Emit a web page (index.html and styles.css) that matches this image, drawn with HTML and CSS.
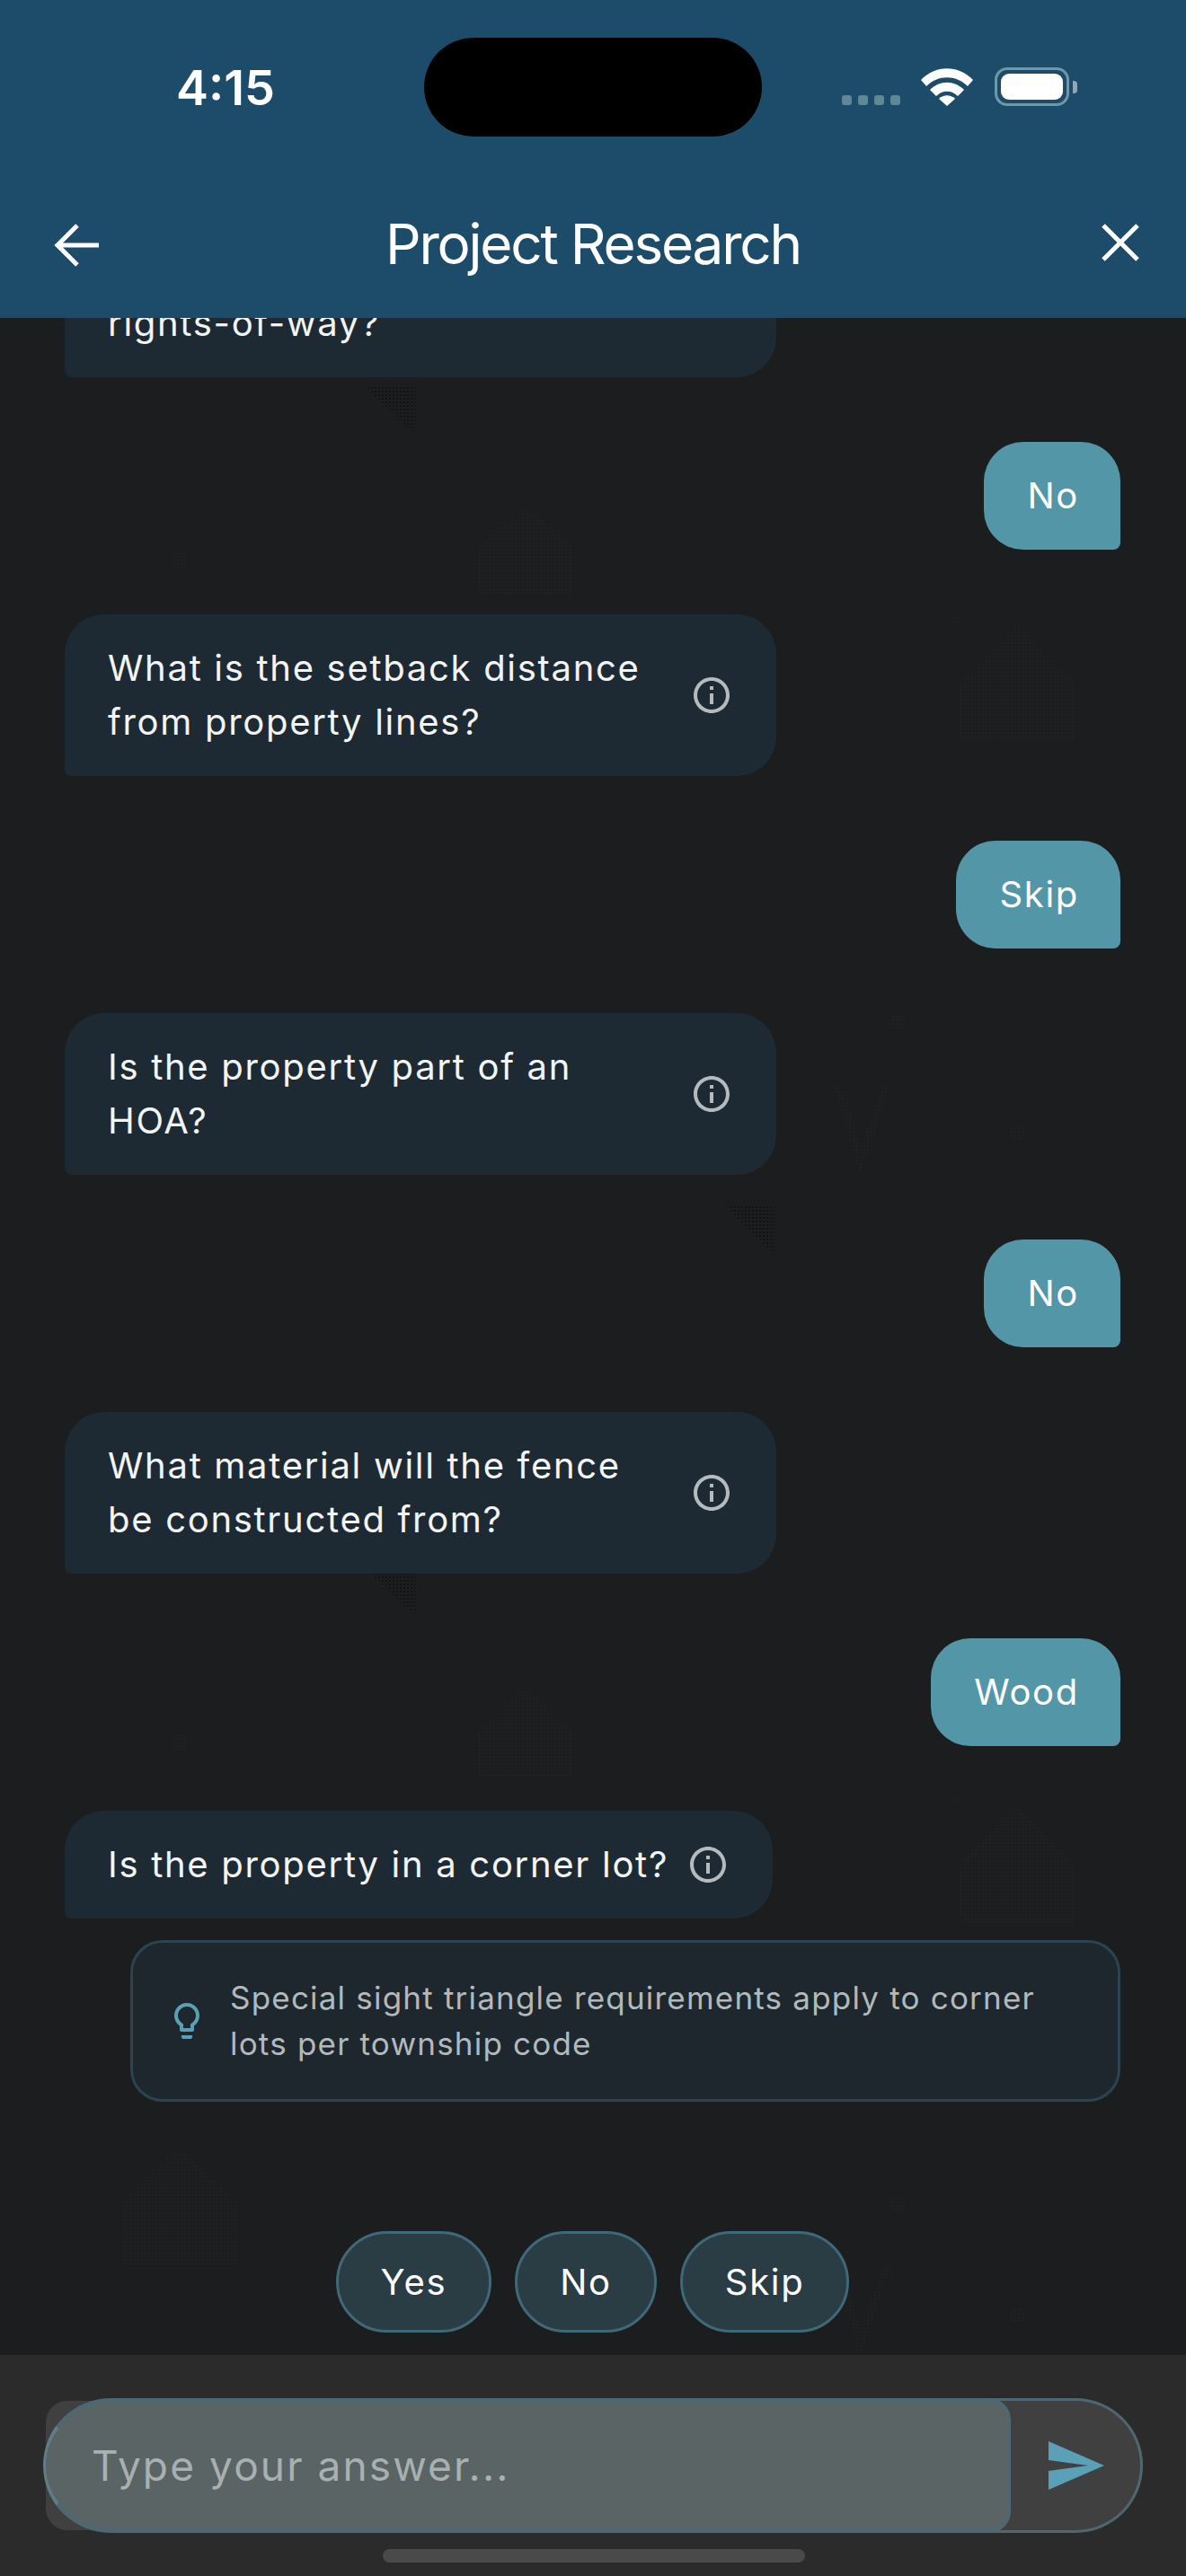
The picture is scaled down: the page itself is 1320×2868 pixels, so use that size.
FILE: index.html
```html
<!DOCTYPE html>
<html lang="en">
<head>
    <meta charset="UTF-8">
    <meta name="viewport" content="width=device-width, initial-scale=1.0">
    <title>Project Research</title>

<link rel="stylesheet" href="styles.css">
</head>
<body>
<div id="tela">

    <div id="topo">
        <div id="status">
            <span id="hora">4:15</span>
            <div id="ilha"></div>
            <div id="status-icones">
                <div id="sinal"><i></i><i></i><i></i><i></i></div>
                <svg width="58" height="42" viewBox="0 0 58 42">
                    <path fill="#fff" d="M0 13 C16 -4 42 -4 58 13 L52 20 C39 7 19 7 6 20Z"/>
                    <path fill="#fff" d="M10 24 C21 13 37 13 48 24 L41 31 C34 24 24 24 17 31Z"/>
                    <path fill="#fff" d="M20 34 C25 29 33 29 38 34 L29 42Z"/>
                </svg>
                <div id="bateria"><div id="bateria-carga"></div></div>
                <div id="bateria-ponta"></div>
            </div>
        </div>
        <div id="barra">
            <svg width="50" height="48" viewBox="0 0 50 48"><path fill="none" stroke="#fff" stroke-width="5" d="M26 2 L4 24 L26 46 M4 24 H50"/></svg>
            <h1 id="titulo">Project Research</h1>
            <svg width="42" height="42" viewBox="0 0 42 42"><path fill="none" stroke="#fff" stroke-width="5" d="M2 2 L40 40 M40 2 L2 40"/></svg>
        </div>
    </div>

    <div id="conversa">
        <!-- desenho de fundo pontilhado, quase invisivel -->
        <svg id="fundo" width="1320" height="2268" viewBox="0 0 1320 2268">
            <defs>
                <pattern id="pontos-escuros" width="4" height="4" patternUnits="userSpaceOnUse">
                    <circle cx="2" cy="2" r="0.7" fill="#000"/>
                </pattern>
                <pattern id="pontos-claros" width="4" height="4" patternUnits="userSpaceOnUse">
                    <circle cx="2" cy="2" r="0.8" fill="#26292b"/>
                </pattern>
                <g id="desenho">
                    <path fill="url(#pontos-escuros)" d="M407 76 L462 76 L462 129Z"/>
                    <path fill="url(#pontos-claros)" d="M585 209 L637 256 L637 308 L533 308 L533 256Z"/>
                    <path fill="url(#pontos-claros)" d="M1131 341 L1195 406 L1195 470 L1067 470 L1067 406Z"/>
                    <circle cx="200" cy="270" r="9" fill="url(#pontos-claros)"/>
                    <circle cx="1064" cy="337" r="5" fill="url(#pontos-claros)"/>
                    <path fill="url(#pontos-escuros)" d="M808 989 L862 989 L862 1043Z"/>
                    <path fill="none" stroke="url(#pontos-claros)" stroke-width="8" d="M932 853 L958 938 L987 853"/>
                    <circle cx="998" cy="784" r="9" fill="url(#pontos-claros)"/>
                    <circle cx="1132" cy="908" r="9" fill="url(#pontos-claros)"/>
                </g>
            </defs>
            <use href="#desenho"/>
            <use href="#desenho" y="1316"/>
            <path fill="url(#pontos-claros)" d="M198 2038 L265 2100 L265 2169 L135 2169 L135 2100Z"/>
        </svg>

        <div class="pergunta cortada">
            <span class="pergunta-texto">rights-of-way?</span>
        </div>
        <div class="resposta">No</div>

        <div class="pergunta">
            <span class="pergunta-texto">What is the setback distance from property lines?</span>
            <svg class="info" width="48" height="48" viewBox="0 0 24 24"><path d="M11 7h2v2h-2zm0 4h2v6h-2zm1-9C6.48 2 2 6.48 2 12s4.48 10 10 10 10-4.48 10-10S17.52 2 12 2zm0 18c-4.41 0-8-3.59-8-8s3.59-8 8-8 8 3.59 8 8-3.59 8-8 8z"/></svg>
        </div>
        <div class="resposta">Skip</div>

        <div class="pergunta">
            <span class="pergunta-texto">Is the property part of an HOA?</span>
            <svg class="info" width="48" height="48" viewBox="0 0 24 24"><path d="M11 7h2v2h-2zm0 4h2v6h-2zm1-9C6.48 2 2 6.48 2 12s4.48 10 10 10 10-4.48 10-10S17.52 2 12 2zm0 18c-4.41 0-8-3.59-8-8s3.59-8 8-8 8 3.59 8 8-3.59 8-8 8z"/></svg>
        </div>
        <div class="resposta">No</div>

        <div class="pergunta">
            <span class="pergunta-texto">What material will the fence be constructed from?</span>
            <svg class="info" width="48" height="48" viewBox="0 0 24 24"><path d="M11 7h2v2h-2zm0 4h2v6h-2zm1-9C6.48 2 2 6.48 2 12s4.48 10 10 10 10-4.48 10-10S17.52 2 12 2zm0 18c-4.41 0-8-3.59-8-8s3.59-8 8-8 8 3.59 8 8-3.59 8-8 8z"/></svg>
        </div>
        <div class="resposta">Wood</div>

        <div class="pergunta">
            <span class="pergunta-texto">Is the property in a corner lot?</span>
            <svg class="info" width="48" height="48" viewBox="0 0 24 24"><path d="M11 7h2v2h-2zm0 4h2v6h-2zm1-9C6.48 2 2 6.48 2 12s4.48 10 10 10 10-4.48 10-10S17.52 2 12 2zm0 18c-4.41 0-8-3.59-8-8s3.59-8 8-8 8 3.59 8 8-3.59 8-8 8z"/></svg>
        </div>

        <div id="dica">
            <svg width="48" height="48" viewBox="0 0 24 24"><path d="M9 21c0 .55.45 1 1 1h4c.55 0 1-.45 1-1v-1H9v1zm3-19C8.14 2 5 5.14 5 9c0 2.38 1.19 4.47 3 5.74V17c0 .55.45 1 1 1h6c.55 0 1-.45 1-1v-2.26c1.81-1.27 3-3.36 3-5.74 0-3.86-3.14-7-7-7zm2.85 11.1l-.85.6V16h-4v-2.3l-.85-.6C7.8 12.16 7 10.63 7 9c0-2.76 2.24-5 5-5s5 2.24 5 5c0 1.63-.8 3.16-2.15 4.1z"/></svg>
            <span id="dica-texto">Special sight triangle requirements apply to corner lots per township code</span>
        </div>

        <div id="opcoes">
            <a class="opcao">Yes</a>
            <a class="opcao">No</a>
            <a class="opcao">Skip</a>
        </div>
    </div>

    <div id="rodape">
        <div id="entrada">
            <div id="campo">Type your answer...</div>
            <a id="enviar">
                <svg width="62" height="54" viewBox="0 0 62 54"><path d="M0 0 L62 27 L0 54 L0 33 L44 27 L0 21Z"/></svg>
            </a>
        </div>
        <div id="indicador"></div>
    </div>

</div>
</body>
</html>
```

FILE: styles.css
```css
* {
    box-sizing: border-box;
}

html, body {
    margin: 0;
    padding: 0;
    background-color: #1c1d1f;
}

#tela {
    width: 1320px;
    height: 2868px;
    display: flex;
    flex-direction: column;
    overflow: hidden;
    font-family: Inter, "Liberation Sans", sans-serif;
    color: #fff;
}

/* topo azul */
#topo {
    height: 354px;
    flex-shrink: 0;
    position: relative;
    z-index: 2;
    background-color: #1c4c69;
}

#status {
    height: 194px;
    padding-top: 42px;
    display: flex;
    align-items: flex-start;
}

#hora {
    width: 472px;
    padding: 26px 0 0 196px;
    font-size: 54px;
    line-height: 60px;
    font-weight: 600;
    letter-spacing: 0;
}

#ilha {
    width: 376px;
    height: 110px;
    border-radius: 55px;
    background-color: #000;
}

#status-icones {
    display: flex;
    align-items: center;
    margin: 33px 0 0 89px;
}

#sinal {
    display: flex;
    gap: 7px;
    margin: 30px 23px 0 0;
}

#sinal i {
    width: 11px;
    height: 11px;
    border-radius: 3px;
    background-color: #5f8796;
}

#bateria {
    width: 83px;
    height: 43px;
    margin-left: 24px;
    padding: 4px;
    border: 3px solid #6f97a5;
    border-radius: 14px;
}

#bateria-carga {
    height: 100%;
    border-radius: 9px;
    background-color: #fff;
}

#bateria-ponta {
    width: 5px;
    height: 14px;
    margin-left: 4px;
    border-radius: 0 4px 4px 0;
    background-color: #8ea9b3;
}

#barra {
    height: 160px;
    padding: 0 52px 0 60px;
    display: flex;
    align-items: flex-start;
}

#barra svg {
    margin-top: 55px;
    flex-shrink: 0;
}

#titulo {
    flex: 1;
    margin: 40px 0 0 0;
    padding-right: 16px;
    text-align: center;
    font-size: 62px;
    line-height: 76px;
    font-weight: 400;
    letter-spacing: -2.2px;
}

/* conversa */
#conversa {
    flex: 1;
    position: relative;
    padding: 0 73px 0 72px;
    display: flex;
    flex-direction: column;
    align-items: flex-start;
    overflow: hidden;
}

#fundo {
    position: absolute;
    top: 0;
    left: 0;
}

.pergunta, .resposta, #dica, #opcoes {
    position: relative;
}

.pergunta {
    max-width: 792px;
    margin-bottom: 72px;
    padding: 30px 48px;
    display: flex;
    align-items: center;
    gap: 20px;
    background-color: #1e2a33;
    border-radius: 44px 44px 44px 8px;
}

.cortada {
    margin-top: -54px;
    width: 792px;
}

.pergunta-texto {
    flex: 1;
    font-size: 40px;
    line-height: 60px;
    letter-spacing: 1.7px;
    color: #f2f4f5;
}

.info {
    flex-shrink: 0;
    fill: #b4bbbe;
}

.resposta {
    align-self: flex-end;
    margin-bottom: 72px;
    padding: 30px 46px 30px 48px;
    font-size: 40px;
    line-height: 60px;
    letter-spacing: 1.7px;
    background-color: #5396a8;
    border-radius: 44px 44px 8px 44px;
}

.pergunta:has(+ #dica) {
    margin-bottom: 24px;
}

#dica {
    width: 1102px;
    height: 180px;
    margin-left: 73px;
    padding: 0 36px;
    display: flex;
    align-items: center;
    gap: 24px;
    background-color: #1e272d;
    border: 3px solid #2b4450;
    border-radius: 36px;
}

#dica svg {
    flex-shrink: 0;
    fill: #5aa0b4;
}

#dica-texto {
    font-size: 35px;
    line-height: 51px;
    letter-spacing: 1.2px;
    color: #b2b9bc;
}

#opcoes {
    width: 100%;
    margin-top: 144px;
    display: flex;
    justify-content: center;
    gap: 26px;
}

.opcao {
    height: 113px;
    padding: 0 47px;
    display: flex;
    align-items: center;
    font-size: 40px;
    letter-spacing: 1.7px;
    background-color: #2a3c44;
    border: 3px solid #3f6878;
    border-radius: 57px;
}

/* rodape */
#rodape {
    height: 246px;
    flex-shrink: 0;
    position: relative;
    padding: 51px 48px 0 51px;
    background-color: #2b2b2b;
}

#entrada {
    height: 144px;
    display: flex;
    background-color: #404040;
    border-radius: 24px 72px 72px 24px;
}

#campo {
    width: 1077px;
    height: 150px;
    margin: -3px 0 0 -3px;
    padding-left: 51px;
    position: relative;
    z-index: 1;
    display: flex;
    align-items: center;
    font-size: 46px;
    letter-spacing: 2.1px;
    color: #a8b0b2;
    background-color: #5a6464;
    border: solid #4f6770;
    border-width: 6px 3px;
    border-left-color: #5f7d89;
    border-radius: 75px 24px 24px 75px;
}

#enviar {
    flex: 1;
    height: 150px;
    margin: -3px 0 0 -30px;
    padding-left: 72px;
    display: flex;
    align-items: center;
    border: solid #4f6770;
    border-width: 3px 3px 3px 0;
    border-radius: 0 75px 75px 0;
}

#enviar svg {
    fill: #5aa0b6;
}

#indicador {
    width: 470px;
    height: 15px;
    margin: 21px 0 0 375px;
    border-radius: 8px;
    background-color: #4a4a4a;
}
```
